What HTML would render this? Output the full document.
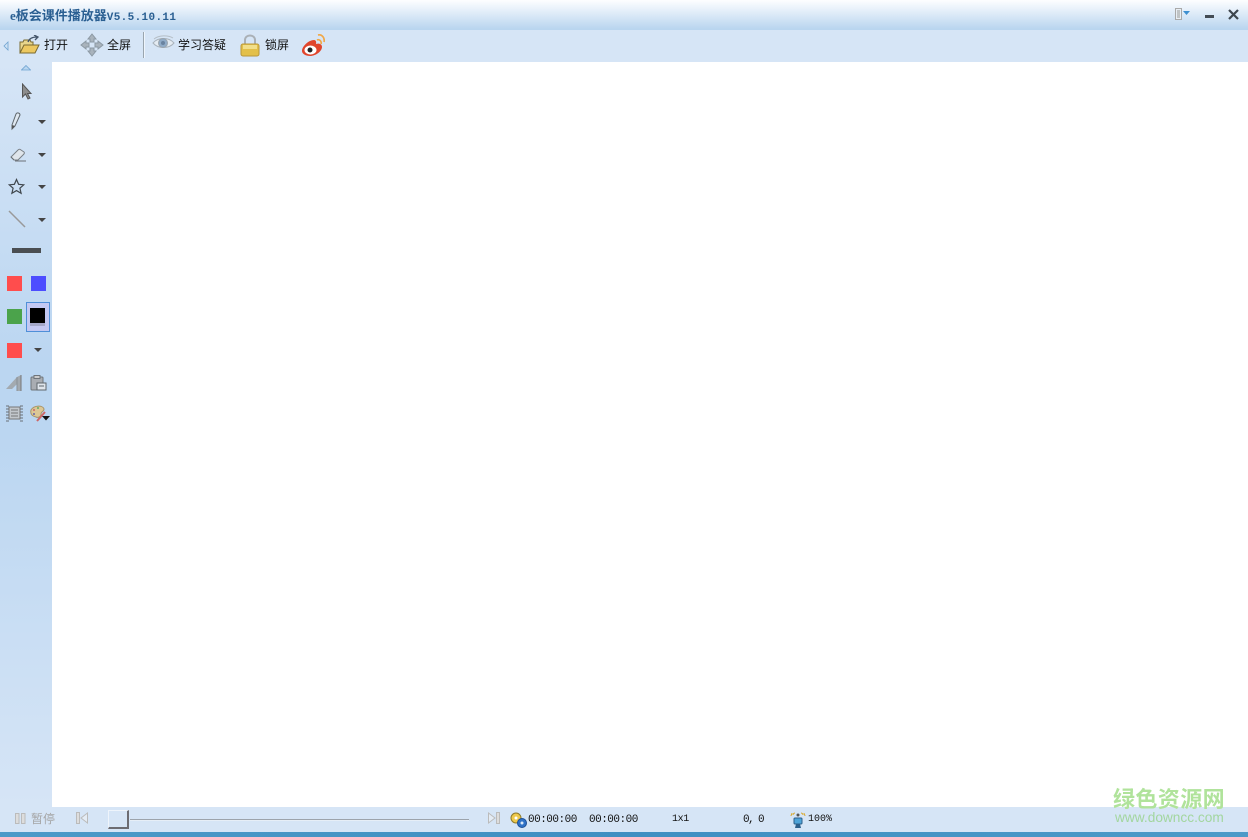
<!DOCTYPE html>
<html><head><meta charset="utf-8"><style>
html,body{margin:0;padding:0;width:1248px;height:837px;overflow:hidden;background:#fff}
body{position:relative;font-family:"Liberation Serif","WenQuanYi Zen Hei","Noto Sans CJK SC",sans-serif;font-size:12px;color:#000}
div,svg{position:absolute}
.t{white-space:nowrap;line-height:14px}
.cn{font-family:"WenQuanYi Zen Hei","Noto Sans CJK SC",sans-serif;font-size:12px;line-height:14px;white-space:nowrap;color:#111}
.m{font-family:"Liberation Mono",monospace;font-size:11px;line-height:14px;white-space:nowrap;color:#111}
.sq{width:15px;height:15px}
.ar{width:0;height:0;border-left:4px solid transparent;border-right:4px solid transparent;border-top:4px solid #444}
</style></head><body>
<div style="left:0;top:0;width:1248px;height:30px;background:linear-gradient(#fdfeff 0,#e6f0fa 10px,#b9d5ef 29px)"></div>
<div style="left:0;top:30px;width:1248px;height:32px;background:#d6e5f6"></div>
<div style="left:0;top:62px;width:52px;height:745px;background:linear-gradient(#d6e5f6 0,#bbd6f1 40%,#bbd6f1 50%,#d6e5f6 100%)"></div>
<div style="left:0;top:807px;width:1248px;height:25px;background:#d6e5f6"></div>
<div style="left:0;top:832px;width:1248px;height:5px;background:linear-gradient(90deg,#4c9ac8,#3f8fc2 50%,#4c9ac8)"></div>

<div class="t" style="left:10px;top:9px;font-size:13px;font-weight:bold;color:#2a5f92;font-family:'Liberation Serif','WenQuanYi Zen Hei','Noto Sans CJK SC',serif">e板会课件播放器<span style="font-family:'Liberation Mono',monospace;font-size:11px;letter-spacing:.35px">V5.5.10.11</span></div>

<svg style="left:1175px;top:8px" width="16" height="13"><rect x=".5" y=".5" width="6" height="11" fill="#e8eef4" stroke="#a9a9a9"/><path d="M2 3h3M2 5h3M2 7h3M2 9h3" stroke="#999"/><path d="M8 3h7l-3.500 4z" fill="#3d8fd0"/></svg>
<div style="left:1205px;top:15px;width:9px;height:3px;background:#444c55"></div>
<svg style="left:1228px;top:9px" width="11" height="11"><path d="M1 1l9 9M10 1l-9 9" stroke="#3e464e" stroke-width="2.200"/></svg>

<svg style="left:3px;top:41px" width="6" height="10"><path d="M5 1L1 5l4 4z" fill="#cfe2f5" stroke="#6fa3d0" stroke-width=".8"/></svg>
<svg style="left:19px;top:35px" width="22" height="20"><path d="M1 18V7h3l1-2h6l1 2h2v3" fill="#e8d68c" stroke="#7a6a30"/><path d="M1 18l4-8h15l-4 8z" fill="#ecc860" stroke="#7a6a30"/><path d="M9 7c1-3 4-5 9-5M15 0l4 2-3 3" fill="none" stroke="#44556a" stroke-width="1.300"/></svg>
<div class="cn" style="left:44px;top:38px">打开</div>
<svg style="left:80px;top:33px" width="24" height="24"><g fill="#a9b3bc" stroke="#8b98a3"><path d="M12 1l4 5h-2v3h-4V6H8z"/><path d="M12 23l4-5h-2v-3h-4v3H8z"/><path d="M1 12l5-4v2h3v4H6v2z"/><path d="M23 12l-5-4v2h-3v4h3v2z"/></g></svg>
<div class="cn" style="left:107px;top:38px">全屏</div>
<div style="left:143px;top:32px;width:1px;height:26px;background:#9aa5ae"></div>
<div style="left:144px;top:32px;width:1px;height:26px;background:#eef5fc"></div>
<svg style="left:152px;top:35px" width="23" height="18"><path d="M1 8c5-6 16-6 21 0-5 6-16 6-21 0z" fill="#e4ebf2" stroke="#a9b3bc"/><circle cx="11" cy="8" r="4.500" fill="#8fabc8" stroke="#9aa5ae"/><circle cx="11" cy="8" r="2" fill="#6a83a0"/><path d="M2 4c5-4 14-4 19-1" fill="none" stroke="#b5bec6"/></svg>
<div class="cn" style="left:178px;top:38px">学习答疑</div>
<svg style="left:240px;top:33px" width="20" height="24"><path d="M5 12V7c0-6 10-6 10 0v5" fill="none" stroke="#aab0b6" stroke-width="2"/><rect x="1" y="11" width="18" height="12" rx="2" fill="#e3c04a" stroke="#b9973a"/><rect x="3" y="12" width="14" height="4" fill="#f2df8a"/></svg>
<div class="cn" style="left:265px;top:38px">锁屏</div>
<svg style="left:301px;top:33px" width="24" height="24"><path d="M1 18c0-5 7-11 12-11 2 0 2.500 2 2 4 3-1 6 0 6 3 0 4-6 9-12 9-4 0-8-2-8-5z" fill="#e0452c"/><ellipse cx="9.500" cy="17" rx="6" ry="4.500" fill="#fff"/><circle cx="9" cy="17" r="2.500" fill="#222"/><path d="M16 7c2-1 5 1 4 4M17 2c4-1 7 3 6 7" fill="none" stroke="#f0a848" stroke-width="1.700"/></svg>

<svg style="left:21px;top:65px" width="10" height="6"><path d="M5 .5L9.500 5H.5z" fill="#b9d6f0" stroke="#6fa3d0" stroke-width=".8"/></svg>
<svg style="left:20px;top:83px" width="14" height="18"><path d="M2.500 1v13l3-3 2.500 5 2-1-2.500-4.500H11z" fill="#8d8d8d" stroke="#555"/></svg>
<svg style="left:10px;top:112px" width="12" height="19"><path d="M2 13L6 2c1-2 4-1 4 1L5 14l-3 3z" fill="#dfe8f1" stroke="#5f666c"/><path d="M2 13l3 1-3 3z" fill="#555"/></svg>
<div class="ar" style="left:38px;top:120px"></div>
<svg style="left:10px;top:148px" width="16" height="14"><path d="M1 9l7-7c1-1 2-1 3 0l3 2c1 1 0 2-1 3l-5 5H4z" fill="#dfe5eb" stroke="#7a8086"/><path d="M1 9l3 3M5 13h11" stroke="#6a7076"/></svg>
<div class="ar" style="left:38px;top:153px"></div>
<svg style="left:8px;top:178px" width="17" height="17"><path d="M8.500 1.500l2.100 4.800 5.200.5-3.900 3.400 1.200 5.100-4.600-2.700-4.600 2.700 1.200-5.100L1.200 6.800l5.200-.5z" fill="none" stroke="#3f464c" stroke-width="1.200"/></svg>
<div class="ar" style="left:38px;top:185px"></div>
<svg style="left:8px;top:210px" width="18" height="18"><path d="M1 1l16 16" stroke="#999" stroke-width="1.500"/></svg>
<div class="ar" style="left:38px;top:218px"></div>
<div style="left:12px;top:248px;width:29px;height:5px;background:#4a4e52"></div>

<div class="sq" style="left:7px;top:276px;background:#ff4d4d"></div>
<div class="sq" style="left:31px;top:276px;background:#4d4dff"></div>
<div class="sq" style="left:7px;top:309px;background:#4ba34b"></div>
<div style="left:26px;top:302px;width:22px;height:28px;border:1px solid #4f8fd8;background:#c3c8f2"></div>
<div class="sq" style="left:30px;top:308px;background:#000;height:15px"></div>
<div style="left:30px;top:323px;width:15px;height:3px;background:#a3a7c8"></div>
<div class="sq" style="left:7px;top:343px;background:#ff4d4d"></div>
<div class="ar" style="left:34px;top:348px"></div>

<svg style="left:6px;top:374px" width="17" height="18"><path d="M0 15L11 3l4-2v16h-4v-7l-5 5z" fill="#a3aab0"/><path d="M15 1v16" stroke="#777"/><path d="M11 3v14" stroke="#8a9096"/></svg>
<svg style="left:30px;top:375px" width="17" height="17"><rect x="1" y="2" width="12" height="13" rx="1" fill="#a9adb2" stroke="#6f757a"/><rect x="4" y="0.500" width="6" height="3" fill="#ccc" stroke="#6f757a"/><rect x="7" y="8" width="9" height="7" fill="#dfe5eb" stroke="#5f666c"/><path d="M9 11h5" stroke="#5f666c"/></svg>
<svg style="left:6px;top:405px" width="17" height="17"><rect x="3" y="2" width="11" height="12" fill="#c2c7cc" stroke="#777"/><path d="M0 1h17M0 4h17M0 7h17M0 10h17M0 13h17M0 16h17" stroke="#6a7076" stroke-dasharray="3 11 3"/><path d="M5 5h7M5 8h7M5 11h7" stroke="#777"/></svg>
<svg style="left:30px;top:405px" width="21" height="18"><path d="M1 5c3-5 12-5 13-1 0 3-3 2-3 5 0 3-3 4-5 3C2 11 0 9 1 5z" fill="#dcc796" stroke="#a89468"/><circle cx="4" cy="5" r="1" fill="#c66"/><circle cx="8" cy="3" r="1" fill="#6a6"/><circle cx="4" cy="9" r="1" fill="#66a"/><path d="M7 16L15 7" stroke="#c66" stroke-width="2"/><path d="M12 11h8l-4 4.500z" fill="#111"/></svg>

<svg style="left:15px;top:813px" width="11" height="12"><path d="M.5.500h3.500v10H.5zM6.500.500H10v10H6.500z" fill="#ddd" stroke="#bbb"/></svg>
<div class="cn" style="left:31px;top:812px;color:#a5a5a5">暂停</div>
<svg style="left:76px;top:812px" width="13" height="13"><rect x=".5" y=".5" width="3" height="11" fill="#ddd" stroke="#bbb"/><path d="M11.500 1L5 6l6.500 5z" fill="#e4ecf5" stroke="#bbb"/></svg>
<div style="left:108px;top:810px;width:18px;height:16px;background:#d6e5f6;border-left:1px solid #eef4fb;border-top:1px solid #eef4fb;border-right:2px solid #6c6c72;border-bottom:2px solid #6c6c72"></div>
<div style="left:130px;top:819px;width:339px;height:1px;background:#9ca3ab"></div>
<div style="left:130px;top:820px;width:339px;height:1px;background:#e6eef7"></div>
<svg style="left:487px;top:812px" width="13" height="13"><path d="M1.500 1L8 6l-6.500 5z" fill="#e4ecf5" stroke="#bbb"/><rect x="9.500" y=".5" width="3" height="11" fill="#ddd" stroke="#bbb"/></svg>

<svg style="left:510px;top:812px" width="18" height="17"><circle cx="6" cy="6" r="5" fill="#eec94c" stroke="#8f7a2a"/><circle cx="6" cy="6" r="1.500" fill="#fff"/><circle cx="12" cy="11" r="4.500" fill="#2f72c8" stroke="#1d4f96"/><circle cx="12" cy="11" r="1.500" fill="#dbe9f8"/></svg>
<div class="m" style="left:528px;top:813px;letter-spacing:-.5px">00:00:00</div>
<div class="m" style="left:589px;top:813px;letter-spacing:-.5px">00:00:00</div>
<div class="m" style="left:672px;top:813px;font-size:10px;letter-spacing:-.4px">1x1</div>
<div class="m" style="left:743px;top:813px;font-size:11px;letter-spacing:-1.600px">0, 0</div>
<svg style="left:790px;top:812px" width="16" height="17"><path d="M3 3c0-1 1-2 2-2M13 3c0-1-1-2-2-2M1 4c0-1 1-2 1-3M15 4c0-1-1-2-1-3" fill="none" stroke="#d9a92e"/><circle cx="8" cy="3" r="1.500" fill="#555"/><rect x="4" y="6" width="8" height="6" rx="1" fill="#4fa4d8" stroke="#2d5f8a"/><path d="M6 12l-1 4h6l-1-4" fill="#2d5f8a"/></svg>
<div class="m" style="left:808px;top:813px;font-size:10px">100%</div>

<div class="cn" style="left:1113px;top:785px;font-size:22px;line-height:26px;font-weight:bold;color:#b0e39b;letter-spacing:.4px;font-family:'Noto Sans CJK SC',sans-serif">绿色资源网</div>
<div class="t" style="left:1115px;top:811px;font-family:'Liberation Sans',sans-serif;font-size:13.700px;color:#a3d69f">www.downcc.com</div>
</body></html>
